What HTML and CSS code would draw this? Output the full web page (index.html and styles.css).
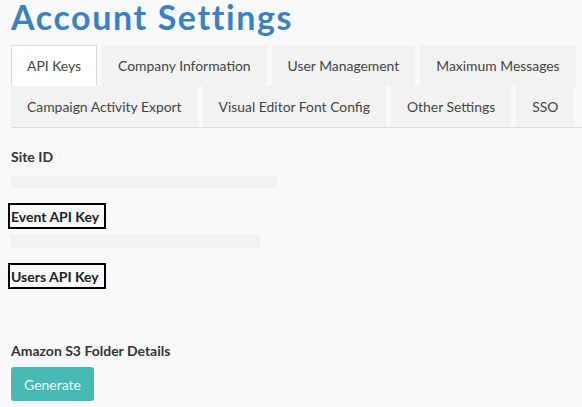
FILE: index.html
```html
<!DOCTYPE html>
<html>
<head>
<meta charset="utf-8">
<link rel="stylesheet" href="styles.css">
</head>
<body>
<div class="page">
  <h1 class="title">Account Settings</h1>
  <ul class="tabs">
    <li class="tab active">API Keys</li>
    <li class="tab">Company Information</li>
    <li class="tab">User Management</li>
    <li class="tab">Maximum Messages</li>
    <li class="tab">Campaign Activity Export</li>
    <li class="tab">Visual Editor Font Config</li>
    <li class="tab">Other Settings</li>
    <li class="tab">SSO</li>
  </ul>
  <div class="content">
    <div class="label label-site">Site ID</div>
    <div class="bar bar-site"></div>
    <div class="label boxed label-event">Event API Key</div>
    <div class="bar bar-event"></div>
    <div class="label boxed label-users">Users API Key</div>
    <div class="label label-s3">Amazon S3 Folder Details</div>
    <button class="btn">Generate</button>
  </div>
</div>
</body>
</html>
```

FILE: styles.css
```css
html, body {
  margin: 0;
  padding: 0;
  background: #f8f9fb;
}
body {
  font-family: Lato, "Open Sans", sans-serif;
  color: #333;
}
.page {
  padding: 0 0 0 11px;
}
.title {
  margin: 0;
  font-size: 34px;
  line-height: 34px;
  font-weight: 700;
  color: #3b81c2;
  letter-spacing: 1.6px;
}
.tabs {
  list-style: none;
  margin: 11px 0 0 0;
  padding: 0;
  display: flex;
  flex-wrap: wrap;
  column-gap: 5px;
  border-bottom: 1px solid #dcdcdc;
}
.tab {
  height: 41px;
  box-sizing: border-box;
  padding: 0 15px;
  display: flex;
  align-items: center;
  font-size: 13.9px;
  color: #444;
  background: #f2f2f2;
  border: 1px solid transparent;
}
.tab.active {
  background: #fff;
  border-color: #dcdcdc;
  border-bottom-color: #fff;
}
.content {
  padding-top: 21px;
}
.label {
  font-size: 14px;
  line-height: 16px;
  font-weight: 700;
  color: #333;
}
.boxed {
  width: fit-content;
  border: 2px solid #000;
  padding: 4px 5px 2px 1px;
  margin-left: -3px;
  color: #222;
}
.bar {
  background: #f2f2f2;
}
.bar-site {
  width: 266px;
  height: 12px;
  margin-top: 11px;
  margin-bottom: 15px;
}
.bar-event {
  width: 249px;
  height: 14px;
  margin-top: 5px;
  margin-bottom: 15px;
}
.label-s3 {
  margin-top: 54px;
}
.btn {
  display: block;
  margin-top: 8px;
  width: 83px;
  height: 34px;
  border: none;
  border-radius: 3px;
  background: #48b8b4;
  color: #eafaf8;
  font-family: Lato, sans-serif;
  font-size: 14px;
  font-weight: 400;
  padding: 0;
}
```
